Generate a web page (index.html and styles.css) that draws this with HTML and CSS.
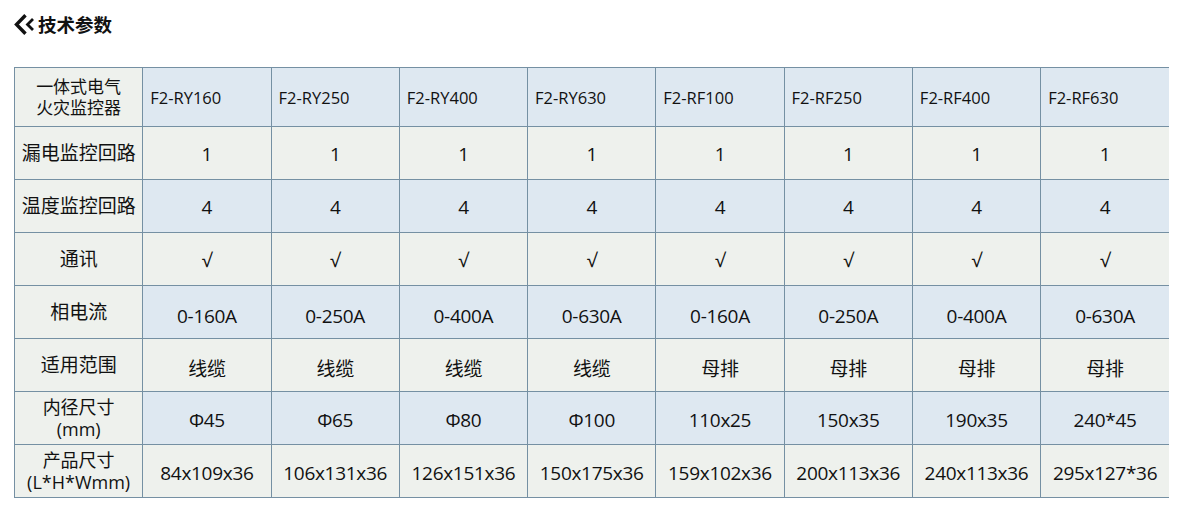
FILE: index.html
```html
<!DOCTYPE html>
<html lang="zh-CN">
<head>
<meta charset="utf-8">
<title>技术参数</title>
<link rel="stylesheet" href="styles.css">
</head>
<body>
<div class="page">
  <h2 class="title">
    <svg class="chev" width="21" height="21" viewBox="0 0 21 21" aria-hidden="true">
      <polyline points="11.5,1.2 2.5,10.5 11.5,19.8" fill="none" stroke="#111" stroke-width="3.4"/>
      <polyline points="19,5 13.5,10.5 19,16" fill="none" stroke="#111" stroke-width="2.8"/>
    </svg>
    <span>技术参数</span>
  </h2>
  <table class="spec">
    <tr class="head blue">
      <th>一体式电气<br>火灾监控器</th>
      <td class="left">F2-RY160</td><td class="left">F2-RY250</td><td class="left">F2-RY400</td><td class="left">F2-RY630</td>
      <td class="left">F2-RF100</td><td class="left">F2-RF250</td><td class="left">F2-RF400</td><td class="left">F2-RF630</td>
    </tr>
    <tr class="gray">
      <th>漏电监控回路</th>
      <td>1</td><td>1</td><td>1</td><td>1</td><td>1</td><td>1</td><td>1</td><td>1</td>
    </tr>
    <tr class="blue">
      <th>温度监控回路</th>
      <td>4</td><td>4</td><td>4</td><td>4</td><td>4</td><td>4</td><td>4</td><td>4</td>
    </tr>
    <tr class="gray">
      <th>通讯</th>
      <td>√</td><td>√</td><td>√</td><td>√</td><td>√</td><td>√</td><td>√</td><td>√</td>
    </tr>
    <tr class="blue low">
      <th>相电流</th>
      <td>0-160A</td><td>0-250A</td><td>0-400A</td><td>0-630A</td><td>0-160A</td><td>0-250A</td><td>0-400A</td><td>0-630A</td>
    </tr>
    <tr class="gray low">
      <th>适用范围</th>
      <td>线缆</td><td>线缆</td><td>线缆</td><td>线缆</td><td>母排</td><td>母排</td><td>母排</td><td>母排</td>
    </tr>
    <tr class="blue two">
      <th>内径尺寸<br>(mm)</th>
      <td>Φ45</td><td>Φ65</td><td>Φ80</td><td>Φ100</td><td>110x25</td><td>150x35</td><td>190x35</td><td>240*45</td>
    </tr>
    <tr class="gray two">
      <th>产品尺寸<br>(L*H*Wmm)</th>
      <td>84x109x36</td><td>106x131x36</td><td>126x151x36</td><td>150x175x36</td><td>159x102x36</td><td>200x113x36</td><td>240x113x36</td><td>295x127*36</td>
    </tr>
  </table>
</div>
</body>
</html>
```

FILE: styles.css
```css
html, body {
  margin: 0;
  padding: 0;
  background: #ffffff;
}
.page {
  padding: 10px 16px 0 14px;
  font-family: "Open Sans", "Noto Sans CJK SC", sans-serif;
  color: #111;
}
.title {
  display: flex;
  align-items: center;
  gap: 3px;
  margin: 0;
  height: 28px;
  font-family: "Noto Sans CJK SC", sans-serif;
  font-size: 18.5px;
  font-weight: 700;
  color: #111;
}
.chev {
  display: block;
}
.spec {
  margin-top: 29px;
  width: 1155px;
  border-collapse: collapse;
  table-layout: fixed;
  font-size: 19px;
}
.spec th,
.spec td {
  border: 1px solid #7590a3;
  padding: 0;
  text-align: center;
  vertical-align: middle;
  line-height: 22px;
}
.spec td {
  letter-spacing: -0.3px;
  padding-top: 1px;
}
.spec td:last-child {
  border-right: none;
}
.spec th {
  font-weight: 400;
  background: #eef1ed;
  font-size: 19px;
  line-height: 22px;
}
.spec tr.head th {
  font-size: 17px;
  line-height: 21px;
}
.spec tr.two th {
  font-size: 18px;
  line-height: 22px;
}
.spec tr {
  height: 53px;
}
.spec tr.head {
  height: 59px;
}
.spec tr.blue td {
  background: #dee8f1;
}
.spec tr.gray td {
  background: #eef1ed;
}
.spec td.left {
  text-align: left;
  padding-left: 7px;
  font-size: 16.5px;
  letter-spacing: 0;
}
.spec tr.low td {
  padding-top: 7px;
}
.spec tr.two td {
  padding-top: 3px;
}
```
